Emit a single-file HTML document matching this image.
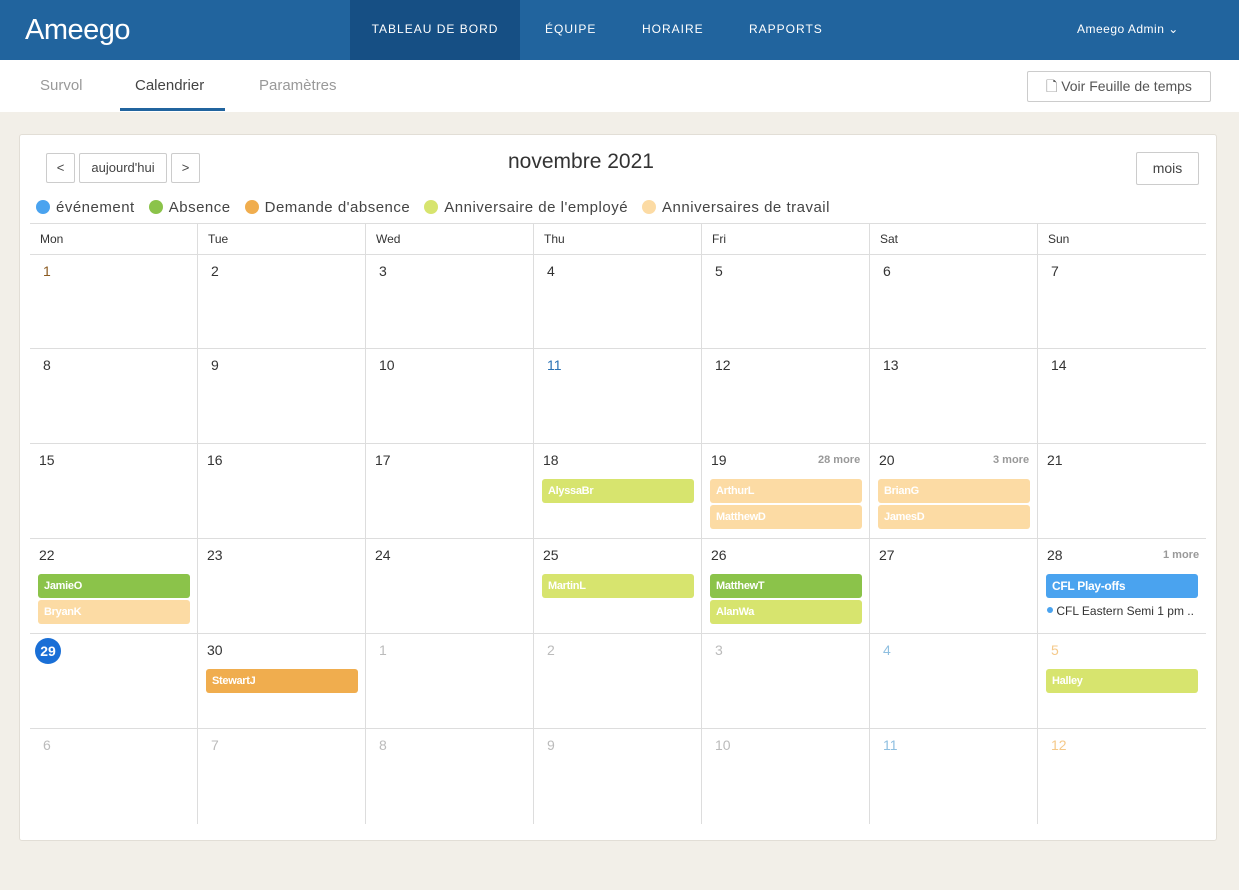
<!DOCTYPE html><html><head><meta charset="utf-8"><style>
*{box-sizing:border-box;margin:0;padding:0}
body{width:1239px;height:890px;background:#f2efe8;font-family:"Liberation Sans",sans-serif;position:relative;overflow:hidden;color:#333}
.nav{position:absolute;left:0;top:0;width:1239px;height:60px;background:#21649e;color:#fff}
.logo{position:absolute;left:25px;top:14px;font-size:29px;letter-spacing:-0.5px}
.ni{position:absolute;top:0;height:60px;line-height:58px;font-size:12px;letter-spacing:1px}
.sub{position:absolute;top:60px;left:0;width:1239px;height:52px;background:#fff}
.tab{position:absolute;top:17px;font-size:15px;color:#999}
.card{position:absolute;left:19px;top:134px;width:1198px;height:707px;background:#fff;border:1px solid #e2ded6;border-radius:3px}
.btn{position:absolute;border:1px solid #ccc;border-radius:2px;background:#fff;font-size:13px;color:#444;text-align:center}
.a{position:absolute}
.hd{position:absolute;top:224px;height:31px;border-bottom:1px solid #ddd;font-size:12px;line-height:30px;padding-left:10px;color:#333}
.vl{position:absolute;width:1px;background:#ddd;top:224px;height:600px}
.hl{position:absolute;left:30px;width:1176px;height:1px;background:#ddd}
.dn{position:absolute;font-size:14px;color:#333}
.ev{position:absolute;height:24px;border-radius:3px;color:#fff;font-size:11px;font-weight:bold;line-height:24px;padding-left:6px;letter-spacing:-0.3px}
.more{position:absolute;font-size:11px;color:#999;font-weight:bold}
.dot{display:inline-block;width:14px;height:14px;border-radius:50%;vertical-align:-2px;margin-right:6px}
</style></head><body>
<div class="nav">
<div class="logo">Ameego</div>
<div class="ni" style="left:350px;width:170px;background:#164f84;text-align:center">TABLEAU DE BORD</div>
<div class="ni" style="left:545px">ÉQUIPE</div>
<div class="ni" style="left:642px">HORAIRE</div>
<div class="ni" style="left:749px">RAPPORTS</div>
<div class="ni" style="left:1077px;letter-spacing:0.5px">Ameego Admin ⌄</div>
</div>
<div class="sub">
<div class="tab" style="left:40px">Survol</div>
<div class="tab" style="left:135px;color:#444">Calendrier</div>
<div style="position:absolute;left:120px;top:48px;width:105px;height:3px;background:#21649e"></div>
<div class="tab" style="left:259px">Paramètres</div>
<div class="btn" style="left:1027px;top:11px;width:184px;height:31px;line-height:29px;font-size:14px;color:#555">🗋 Voir Feuille de temps</div>
</div>
<div class="card"></div>
<div class="btn" style="left:46px;top:153px;width:29px;height:30px;line-height:28px">&lt;</div>
<div class="btn" style="left:79px;top:153px;width:88px;height:30px;line-height:28px">aujourd'hui</div>
<div class="btn" style="left:171px;top:153px;width:29px;height:30px;line-height:28px">&gt;</div>
<div class="a" style="left:508px;top:150px;font-size:21px;color:#333">novembre 2021</div>
<div class="btn" style="left:1136px;top:152px;width:63px;height:33px;line-height:31px;font-size:14px">mois</div>
<div class="a" style="left:36px;top:199px;font-size:15px;color:#444;white-space:nowrap;letter-spacing:0.5px">
<span class="dot" style="background:#4aa3ef"></span>événement&nbsp;&nbsp; <span class="dot" style="background:#8bc34a"></span>Absence&nbsp;&nbsp; <span class="dot" style="background:#f0ad4e"></span>Demande d'absence&nbsp;&nbsp; <span class="dot" style="background:#d7e46e"></span>Anniversaire de l'employé&nbsp;&nbsp; <span class="dot" style="background:#fcdba4"></span>Anniversaires de travail</div>
<div class="hl" style="top:223px"></div>
<div class="hd" style="left:30px;width:168px">Mon</div><div class="hd" style="left:198px;width:168px">Tue</div><div class="hd" style="left:366px;width:168px">Wed</div><div class="hd" style="left:534px;width:168px">Thu</div><div class="hd" style="left:702px;width:168px">Fri</div><div class="hd" style="left:870px;width:168px">Sat</div><div class="hd" style="left:1038px;width:168px">Sun</div>
<div class="vl" style="left:197px"></div><div class="vl" style="left:365px"></div><div class="vl" style="left:533px"></div><div class="vl" style="left:701px"></div><div class="vl" style="left:869px"></div><div class="vl" style="left:1037px"></div>
<div class="hl" style="top:348px"></div><div class="hl" style="top:443px"></div><div class="hl" style="top:538px"></div><div class="hl" style="top:633px"></div><div class="hl" style="top:728px"></div>
<div id="d"></div>
<script>
var rows=[263,357,452,547,642,737],cols=[30,198,366,534,702,870,1038];
var nums=[[1,2,3,4,5,6,7],[8,9,10,11,12,13,14],[15,16,17,18,19,20,21],[22,23,24,25,26,27,28],[29,30,1,2,3,4,5],[6,7,8,9,10,11,12]];
var h='';
for(var r=0;r<6;r++)for(var c=0;c<7;c++){var n=nums[r][c],col='#333';
if(r==0&&c==0)col='#8a5a20';if(r==1&&c==3)col='#2a72b5';
if((r==4&&c>=2)||r==5){col='#bbb';if(c==5)col='#8fbfe0';if(c==6)col='#f5c98a';}
if(r==4&&c==0){h+='<div class="a" style="left:35px;top:638px;width:26px;height:26px;border-radius:50%;background:#1a6fd6;color:#fff;font-weight:bold;font-size:14px;text-align:center;line-height:26px">29</div>';continue;}
var off=(r==2||r==3||(r==4&&c==1))?0:4;
h+='<div class="dn" style="left:'+(cols[c]+9+off)+'px;top:'+rows[r]+'px;color:'+col+'">'+n+'</div>';}
var G='#8bc34a',Y='#d7e46e',P='#fcdba4',O='#f0ad4e';
function E(top,c,t,bg){h+='<div class="ev" style="left:'+(cols[c]+8)+'px;top:'+top+'px;width:152px;background:'+bg+'">'+t+'</div>';}
E(479,3,'AlyssaBr',Y);E(479,4,'ArthurL',P);E(505,4,'MatthewD',P);E(479,5,'BrianG',P);E(505,5,'JamesD',P);
E(574,0,'JamieO',G);E(600,0,'BryanK',P);E(574,3,'MartinL',Y);E(574,4,'MatthewT',G);E(600,4,'AlanWa',Y);
h+='<div class="ev" style="left:1046px;top:574px;width:152px;background:#4aa3ef;font-size:12px">CFL Play-offs</div>';
h+='<div class="a" style="left:1047px;top:604px;font-size:12px;color:#333;white-space:nowrap"><span style="display:inline-block;width:6px;height:6px;border-radius:50%;background:#4aa3ef;vertical-align:2px"></span> CFL Eastern Semi 1 pm ..</div>';
E(669,1,'StewartJ',O);E(669,6,'Halley',Y);
h+='<div class="more" style="left:818px;top:454px">28 more</div><div class="more" style="left:993px;top:454px">3 more</div><div class="more" style="left:1163px;top:549px">1 more</div>';
document.getElementById('d').innerHTML=h;
</script>
</body></html>
